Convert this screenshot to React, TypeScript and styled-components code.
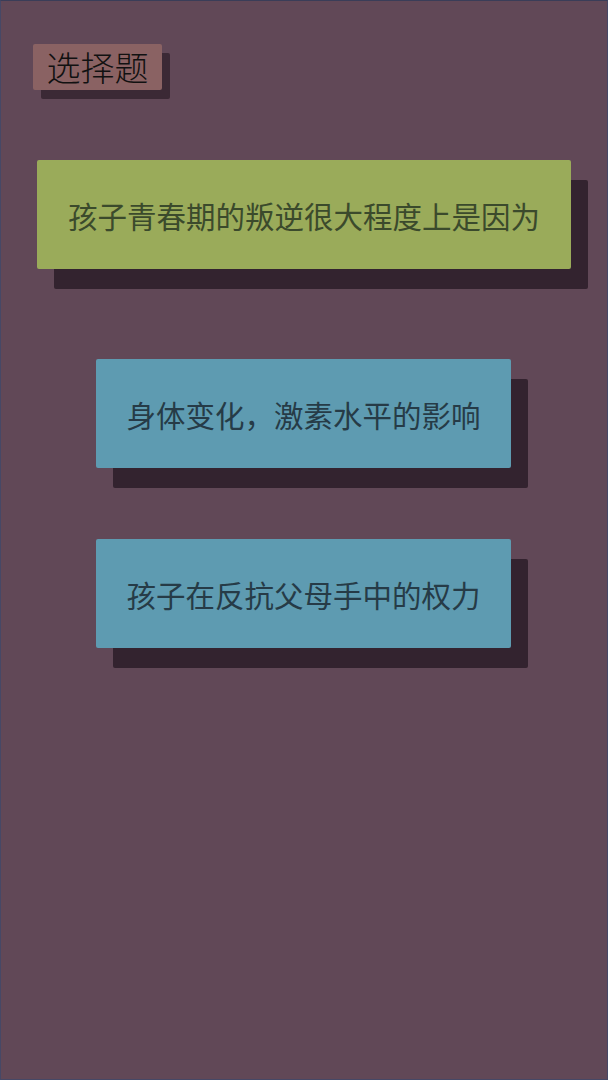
import styled, { createGlobalStyle } from "styled-components";

const GlobalStyle = createGlobalStyle`
  html, body {
    margin: 0;
    padding: 0;
    background: #614857;
  }
  * {
    box-sizing: border-box;
  }
`;

const Screen = styled.div`
  width: 608px;
  height: 1080px;
  background: #614857;
  border: 1px solid #464866;
  border-top-color: #3a3d58;
  display: flex;
  flex-direction: column;
  font-family: "Noto Sans CJK SC", "Noto Sans", sans-serif;
`;

const Header = styled.div`
  padding: 43px 0 0 32px;
  display: flex;
`;

const TitleTag = styled.div`
  width: 129px;
  height: 46px;
  background: #8a6263;
  border-radius: 2px;
  box-shadow: 8px 9px 0 #3b2935;
  color: #111;
  font-family: "Noto Sans CJK SC", sans-serif;
  font-size: 34px;
  font-weight: 300;
  line-height: 46px;
  text-align: center;
  -webkit-font-smoothing: none;
`;

const Question = styled.div`
  margin: 70px 0 0 36px;
  width: 534px;
  height: 109px;
  background: #9aab5a;
  border-radius: 2px;
  box-shadow: 17px 20px 0 #33232f;
  color: #3b4a2c;
  font-size: 29.5px;
  display: flex;
  align-items: center;
  justify-content: center;
`;

const Options = styled.div`
  margin: 90px 0 0 95px;
  display: flex;
  flex-direction: column;
  gap: 71px;
`;

const Option = styled.div`
  width: 415px;
  height: 109px;
  background: #5e9bb1;
  border-radius: 2px;
  box-shadow: 17px 20px 0 #33232f;
  color: #263b47;
  font-size: 29.5px;
  display: flex;
  align-items: center;
  justify-content: center;
`;

const options = ["身体变化，激素水平的影响", "孩子在反抗父母手中的权力"];

export default function App() {
  return (
    <>
      <GlobalStyle />
      <Screen>
        <Header>
          <TitleTag>选择题</TitleTag>
        </Header>
        <Question>孩子青春期的叛逆很大程度上是因为</Question>
        <Options>
          {options.map((o) => (
            <Option key={o}>{o}</Option>
          ))}
        </Options>
      </Screen>
    </>
  );
}
